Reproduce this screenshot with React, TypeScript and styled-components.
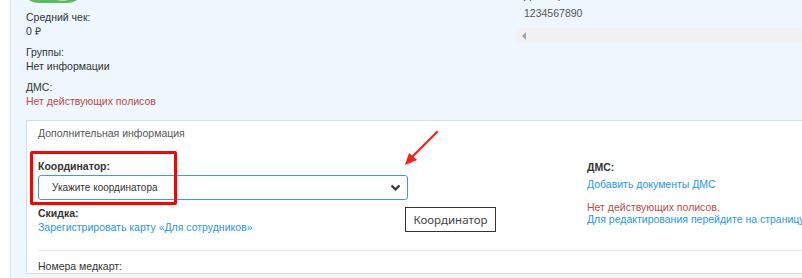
import React from 'react';
import styled, { createGlobalStyle } from 'styled-components';

const GlobalStyle = createGlobalStyle`
  html, body {
    margin: 0;
    padding: 0;
    background: #fff;
    overflow: hidden;
  }
  body {
    font-family: 'Liberation Sans', Arial, sans-serif;
    font-size: 10.5px;
    color: #333;
  }
`;

const Page = styled.div`
  display: flex;
  width: 960px;
  height: 278px;
  padding-left: 10px;
  background: #fff;
`;

const Content = styled.div`
  flex: 1;
  background: #eef6fe;
  border-left: 1px solid #dfe7ef;
  padding-left: 15px;
  overflow: hidden;
`;

const TopSection = styled.div`
  display: grid;
  grid-template-columns: 490px 1fr;
  margin-top: -20px;
`;

const Column = styled.div<{ $pt?: number }>`
  display: flex;
  flex-direction: column;
  padding-top: ${p => p.$pt ?? 0}px;
`;

const Switch = styled.div`
  position: relative;
  width: 54px;
  height: 20px;
  margin-top: 3px;
  margin-bottom: 7px;
  border-radius: 0 0 14px 14px / 0 0 8px 8px;
  background: #5cb85c;
  &::after {
    content: '';
    position: absolute;
    right: 9px;
    top: 0;
    width: 17px;
    height: 18px;
    border-radius: 0 0 10px 10px / 0 0 4px 4px;
    background: #c7cfc8;
  }
`;

const Field = styled.div`
  display: flex;
  flex-direction: column;
  margin-bottom: 7px;
`;

const Label = styled.div<{ $bold?: boolean; $indent?: number }>`
  line-height: 14px;
  color: #333;
  font-weight: ${p => (p.$bold ? 700 : 400)};
  margin-left: ${p => p.$indent ?? 0}px;
  white-space: nowrap;
`;

const Value = styled.div<{ $tone?: 'plain' | 'muted' | 'danger' | 'link'; $indent?: number }>`
  line-height: 14px;
  white-space: nowrap;
  margin-left: ${p => p.$indent ?? 0}px;
  color: ${p =>
    p.$tone === 'danger'
      ? '#b94a48'
      : p.$tone === 'link'
      ? '#1e96e8'
      : p.$tone === 'muted'
      ? '#555'
      : '#333'};
  cursor: ${p => (p.$tone === 'link' ? 'pointer' : 'default')};
`;

const Scrollbar = styled.div`
  display: flex;
  align-items: center;
  height: 15px;
  margin-top: 8px;
  padding-left: 6px;
  background: #f1f1f1;
`;

const ScrollArrow = styled.span`
  width: 0;
  height: 0;
  border-top: 4px solid transparent;
  border-bottom: 4px solid transparent;
  border-right: 4px solid #a3a3a3;
`;

const Panel = styled.section`
  position: relative;
  margin-top: 5px;
  background: #fff;
  border: 1px solid #dcdcdc;
  padding: 5px 0 0 11px;
`;

const PanelTitle = styled.div`
  line-height: 14px;
  color: #555;
`;

const PanelRow = styled.div`
  display: grid;
  grid-template-columns: 370px 1fr;
  column-gap: 179px;
  padding-top: 19px;
  padding-bottom: 16px;
  border-bottom: 1px solid #e6e6e6;
`;

const LeftBlock = styled.div`
  display: flex;
  flex-direction: column;
`;

const RightBlock = styled.div`
  display: flex;
  flex-direction: column;
  padding-top: 1px;
  gap: 3px;
`;

const Select = styled.div`
  display: flex;
  align-items: center;
  justify-content: space-between;
  box-sizing: border-box;
  height: 25px;
  margin: 2px 0 6px;
  padding: 0 6px 0 13px;
  border: 1px solid #3d9be0;
  border-radius: 3px;
  background: #fff;
  font-size: 10px;
  color: #333;
`;

const Gap = styled.div<{ $h: number }>`
  height: ${p => p.$h}px;
`;

const CardsRow = styled.div`
  padding-top: 8px;
  line-height: 14px;
`;

const Highlight = styled.div`
  position: absolute;
  left: 3px;
  top: 30px;
  width: 141px;
  height: 48px;
  border: 3px solid #ff0000;
  border-radius: 2px;
  pointer-events: none;
`;

const Arrow = styled.svg`
  position: absolute;
  left: 374px;
  top: 8px;
  width: 40px;
  height: 40px;
  pointer-events: none;
`;

const Tooltip = styled.div`
  position: absolute;
  left: 378px;
  top: 86px;
  box-sizing: border-box;
  width: 91px;
  height: 25px;
  display: flex;
  align-items: center;
  justify-content: center;
  background: #fff;
  border: 1px solid #333;
  font-family: 'Noto Sans', 'Open Sans', sans-serif;
  font-size: 11.5px;
  color: #444;
`;

const Chevron = () => (
  <svg width="11" height="8" viewBox="0 0 11 8">
    <path d="M1.5 1.5 L5.5 5.5 L9.5 1.5" fill="none" stroke="#333" strokeWidth="2.2" />
  </svg>
);

export default function App() {
  return (
    <>
      <GlobalStyle />
      <Page>
        <Content>
          <TopSection>
            <Column>
              <Switch />
              <Field>
                <Label>Средний чек:</Label>
                <Value>0 ₽</Value>
              </Field>
              <Field>
                <Label>Группы:</Label>
                <Value>Нет информации</Value>
              </Field>
              <Field>
                <Label>ДМС:</Label>
                <Value $tone="danger">Нет действующих полисов</Value>
              </Field>
            </Column>
            <Column $pt={8}>
              <Label $indent={8} style={{ marginBottom: 4 }}>Договор:</Label>
              <Value $tone="muted" $indent={8}>1234567890</Value>
              <Scrollbar>
                <ScrollArrow />
              </Scrollbar>
            </Column>
          </TopSection>

          <Panel>
            <PanelTitle>Дополнительная информация</PanelTitle>
            <PanelRow>
              <LeftBlock>
                <Label $bold>Координатор:</Label>
                <Select>
                  <span>Укажите координатора</span>
                  <Chevron />
                </Select>
                <Label $bold>Скидка:</Label>
                <Value $tone="link">Зарегистрировать карту «Для сотрудников»</Value>
              </LeftBlock>
              <RightBlock>
                <Label $bold>ДМС:</Label>
                <Value $tone="link">Добавить документы ДМС</Value>
                <Gap $h={3} />
                <Value $tone="danger">Нет действующих полисов.</Value>
                <Value $tone="link" style={{ marginTop: -5 }}>
                  Для редактирования перейдите на страницу полисов
                </Value>
              </RightBlock>
            </PanelRow>
            <CardsRow>Номера медкарт:</CardsRow>

            <Highlight />
            <Arrow viewBox="0 0 40 40">
              <line x1="36" y1="3" x2="10" y2="29" stroke="#ff1a1a" strokeWidth="2.2" strokeLinecap="round" />
              <polygon points="4,36 8,24 16,31" fill="#ff1a1a" />
            </Arrow>
            <Tooltip>Координатор</Tooltip>
          </Panel>
        </Content>
      </Page>
    </>
  );
}
